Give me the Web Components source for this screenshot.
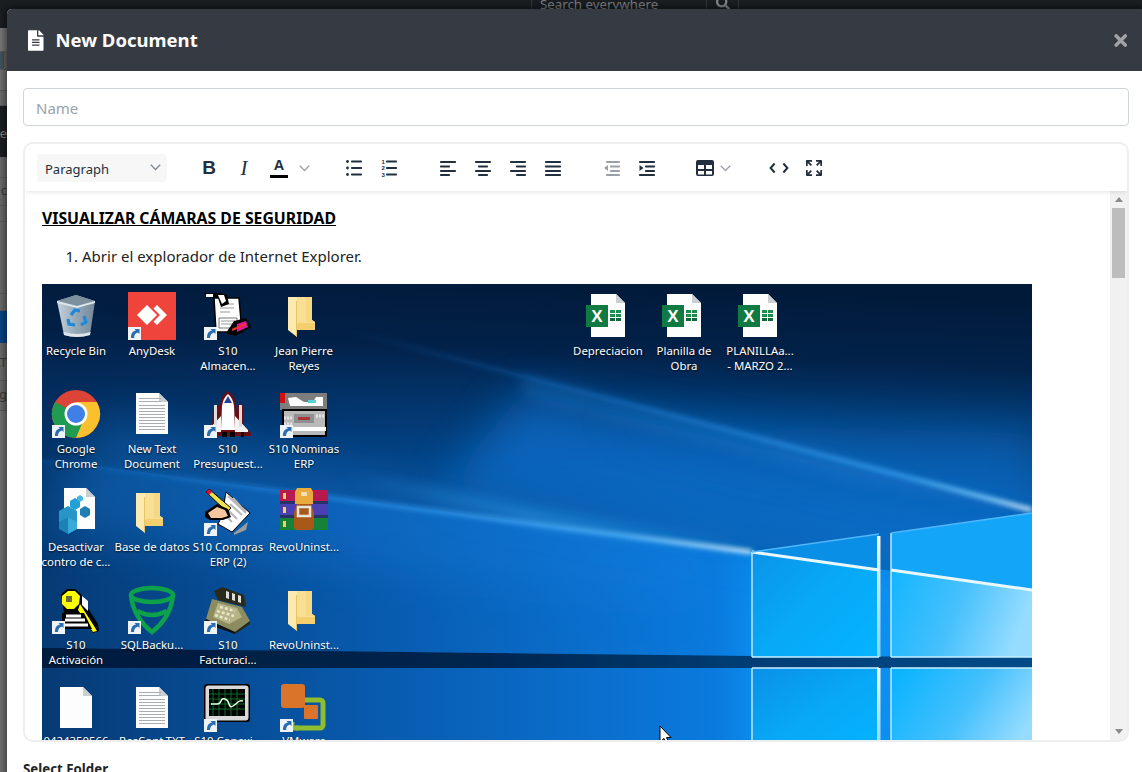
<!DOCTYPE html>
<html lang="es"><head><meta charset="utf-8"><title>New Document</title>
<style>
html,body{margin:0;height:100%;overflow:hidden;background:#6e6e6e;font-family:"Noto Sans","Open Sans",sans-serif}
</style></head><body>
<behind-page></behind-page>
<doc-modal heading="New Document">
  <name-field placeholder="Name"></name-field>
  <rich-editor>
    <h4 style="margin:0;font:700 15.8px/20px 'Noto Sans',sans-serif;color:#000;text-decoration:underline">VISUALIZAR CÁMARAS DE SEGURIDAD</h4>
    <ol style="margin:18px 0 18px;padding-left:40px;font:15px/20px 'Noto Sans',sans-serif;color:#222"><li>Abrir el explorador de Internet Explorer.</li></ol>
    <desktop-shot>
      <desk-icon x="10" y="8" icon="bin">Recycle Bin</desk-icon>
      <desk-icon x="86" y="8" icon="anydesk" link>AnyDesk</desk-icon>
      <desk-icon x="162" y="8" icon="almacen" link>S10<br>Almacen...</desk-icon>
      <desk-icon x="238" y="8" icon="folder">Jean Pierre<br>Reyes</desk-icon>
      <desk-icon x="10" y="106" icon="chrome" link>Google<br>Chrome</desk-icon>
      <desk-icon x="86" y="106" icon="text">New Text<br>Document</desk-icon>
      <desk-icon x="162" y="106" icon="shuttle" link>S10<br>Presupuest...</desk-icon>
      <desk-icon x="238" y="106" icon="nominas" link>S10 Nominas<br>ERP</desk-icon>
      <desk-icon x="10" y="204" icon="registry">Desactivar<br>contro de c...</desk-icon>
      <desk-icon x="86" y="204" icon="folder">Base de datos</desk-icon>
      <desk-icon x="162" y="204" icon="compras" link>S10 Compras<br>ERP (2)</desk-icon>
      <desk-icon x="238" y="204" icon="rar">RevoUninst...</desk-icon>
      <desk-icon x="10" y="302" icon="key" link>S10<br>Activación</desk-icon>
      <desk-icon x="86" y="302" icon="sql" link>SQLBacku...</desk-icon>
      <desk-icon x="162" y="302" icon="register" link>S10<br>Facturaci...</desk-icon>
      <desk-icon x="238" y="302" icon="folder">RevoUninst...</desk-icon>
      <desk-icon x="10" y="400" icon="blank" style="--lt:49px">0424350566</desk-icon>
      <desk-icon x="86" y="400" icon="text" style="--lt:49px">ResCont.TXT</desk-icon>
      <desk-icon x="162" y="400" icon="monitor" link style="--lt:49px">S10 Conexi...</desk-icon>
      <desk-icon x="238" y="400" icon="vm" link style="--lt:49px">VMware</desk-icon>
      <desk-icon x="542" y="8" icon="excel">Depreciacion</desk-icon>
      <desk-icon x="618" y="8" icon="excel">Planilla de<br>Obra</desk-icon>
      <desk-icon x="694" y="8" icon="excel">PLANILLAa...<br>- MARZO 2...</desk-icon>
    </desktop-shot>
  </rich-editor>
  <folder-label>Select Folder</folder-label>
</doc-modal>
<script>
function el(name, css, html, init){
  customElements.define(name, class extends HTMLElement{
    constructor(){super();this.attachShadow({mode:'open'}).innerHTML='<style>'+css+'</style>'+(typeof html==='function'?html(this):html);}
    connectedCallback(){ if(init) init(this); }
  });
}
const FA_FILE='M224 136V0H24C10.7 0 0 10.7 0 24v464c0 13.3 10.7 24 24 24h336c13.3 0 24-10.7 24-24V160H248c-13.2 0-24-10.8-24-24zm64 236c0 6.6-5.4 12-12 12H108c-6.6 0-12-5.4-12-12v-8c0-6.6 5.4-12 12-12h168c6.6 0 12 5.4 12 12v8zm0-64c0 6.6-5.4 12-12 12H108c-6.6 0-12-5.4-12-12v-8c0-6.6 5.4-12 12-12h168c6.6 0 12 5.4 12 12v8zm0-72v8c0 6.6-5.4 12-12 12H108c-6.6 0-12-5.4-12-12v-8c0-6.6 5.4-12 12-12h168c6.6 0 12 5.4 12 12zm96-114.1v6.1H256V0h6.1c6.4 0 12.5 2.5 17 7l97.9 98c4.5 4.5 7 10.6 7 16.9z';
const FA_X='M242.72 256l100.07-100.07c12.28-12.28 12.28-32.19 0-44.48l-22.24-22.24c-12.28-12.28-32.19-12.28-44.48 0L176 189.28 75.93 89.21c-12.28-12.28-32.19-12.28-44.48 0L9.21 111.45c-12.28 12.28-12.28 32.19 0 44.48L109.28 256 9.21 356.07c-12.28 12.28-12.28 32.19 0 44.48l22.24 22.24c12.28 12.28 32.2 12.28 44.48 0L176 322.72l100.07 100.07c12.28 12.28 32.2 12.28 44.48 0l22.24-22.24c12.28-12.28 12.28-32.19 0-44.48L242.72 256z';
const FA_SEARCH='M505 442.7L405.3 343c-4.5-4.5-10.6-7-17-7H372c27.6-35.3 44-79.7 44-128C416 93.1 322.9 0 208 0S0 93.1 0 208s93.1 208 208 208c48.3 0 92.7-16.4 128-44v16.3c0 6.4 2.5 12.5 7 17l99.7 99.7c9.4 9.4 24.6 9.4 33.9 0l28.3-28.3c9.4-9.4 9.4-24.6.1-34zM208 336c-70.7 0-128-57.2-128-128 0-70.7 57.2-128 128-128 70.7 0 128 57.2 128 128 0 70.7-57.2 128-128 128z';

/* page behind the modal */
el('behind-page',`
:host{display:flex;flex-direction:column;position:fixed;inset:0;background:#6f6f6f;overflow:hidden}
.nav{height:28px;flex:none;background:#1b1f23;display:flex;justify-content:flex-start;padding-left:531px;box-sizing:border-box}
.search{width:176px;height:28px;box-sizing:border-box;border:1px solid #33383d;border-top:0;color:#80848a;font:13.3px/8px "Noto Sans",sans-serif;padding-left:8px;overflow:hidden;white-space:nowrap}
.btn{width:32px;height:28px;box-sizing:border-box;border-right:1px solid #33383d;display:flex;justify-content:center;padding-left:1px}
.btn svg{width:14px;height:14px;fill:#8b8f93;margin-top:-4px}
.r{flex:none;box-sizing:border-box;border-bottom:1px solid #5f5f5f;width:7px;overflow:hidden;color:#3d3d3d;font:13px/1 "Noto Sans",sans-serif;white-space:nowrap;direction:rtl}
`,`<div class="nav"><div class="search">Search everywhere</div><div class="btn"><svg viewBox="0 0 512 512"><path d="${FA_SEARCH}"/></svg></div></div>
<div class="r" style="height:24px;background:#7b7b7b"></div>
<div class="r" style="height:18px;background:linear-gradient(90deg,#45555f 0 4px,#6a6a6a 4px)"></div>
<div class="r" style="height:21px;background:#727272"></div>
<div class="r" style="height:15px;background:#707070"></div>
<div class="r" style="height:51px;background:#1e1f24;color:#8c8c78;line-height:54px;border:0">e</div>
<div class="r" style="height:21px;background:#6d6d6d"></div>
<div class="r" style="height:28px;background:#6d6d6d;line-height:24px">c</div>
<div class="r" style="height:16px;background:#6d6d6d"></div>
<div class="r" style="height:72px;background:#6d6d6d"></div>
<div class="r" style="height:17px;background:#6d6d6d"></div>
<div class="r" style="height:32px;background:#0a4688;border:0"></div>
<div class="r" style="height:38px;background:#6d6d6d;line-height:38px">AT</div>
<div class="r" style="height:30px;background:#6d6d6d;line-height:26px">og</div>
<div style="flex:1;background:#757575"></div>`);

/* modal shell */
el('doc-modal',`
:host{display:flex;flex-direction:column;position:fixed;top:9px;left:7px;right:0;height:900px;background:#fff;border-radius:5px 0 0 0;box-shadow:0 0 9px 2px rgba(0,0,0,.55)}
header{height:62px;flex:none;box-sizing:border-box;padding:1px 15px 0 21px;background:#363a42;border-radius:5px 0 0 0;display:flex;align-items:center;color:#fff}
.f{width:15.5px;height:21px;fill:#fff;flex:none;margin:0 12px 1px 0}
h1{margin:0;flex:1;font:700 18.500px/1 "Noto Sans",sans-serif}
.x{width:13.5px;height:19px;fill:#a0a2a5;flex:none;margin-bottom:1px}
main{padding:17px 13px 0 16px;display:flex;flex-direction:column;gap:16px}
`,h=>`<header><svg class="f" viewBox="0 0 384 512"><path d="${FA_FILE}"/></svg><h1>${h.getAttribute('heading')}</h1><svg class="x" viewBox="0 0 352 512"><path d="${FA_X}"/></svg></header><main><slot></slot></main>`);

el('name-field',`
:host{display:flex;align-items:center;height:38px;box-sizing:border-box;border:1px solid #ced4da;border-radius:4px;padding:2px 12px 0;background:#fff;color:#9aa1a8;font:15px "Noto Sans",sans-serif}
`,h=>`<span>${h.getAttribute('placeholder')}</span>`);

el('folder-label',`
:host{display:block;color:#212529;font:700 13.3px/20px "Noto Sans",sans-serif;padding-top:1px}
`,`<slot></slot>`);

/* editor */
el('rich-editor',`
:host{display:flex;flex-direction:column;height:600px;box-sizing:border-box;border:2px solid #eeeeee;border-radius:10px;overflow:hidden;background:#fff}
.body{flex:1;display:flex;min-height:0}
.doc{flex:1;min-width:0;overflow:hidden;padding:17px 0 0 17px;box-sizing:border-box}
`,`<editor-toolbar></editor-toolbar><div class="body"><div class="doc"><slot></slot></div><fake-scrollbar></fake-scrollbar></div>`);

const ink='#222f3e';
const r=(x,y,w,h='2')=>`<rect x="${x}" y="${y}" width="${w}" height="${h}" rx=".8"/>`;
const ICONS={
 bul:`<circle cx="5.5" cy="5.5" r="1.4"/><circle cx="5.5" cy="12" r="1.4"/><circle cx="5.5" cy="18.5" r="1.4"/>`+r(9,4.5,11)+r(9,11,11)+r(9,17.5,11),
 num:`<text x="4.5" y="8" font-size="6" font-weight="700" font-family="Liberation Sans">1</text><text x="4.5" y="14.3" font-size="6" font-weight="700" font-family="Liberation Sans">2</text><text x="4.5" y="20.5" font-size="6" font-weight="700" font-family="Liberation Sans">3</text>`+r(9,4.5,11)+r(9,11,11)+r(9,17.5,11),
 al:r(4,5,16)+r(4,9.5,10)+r(4,14,16)+r(4,18,10),
 ac:r(4,5,16)+r(7,9.5,10)+r(4,14,16)+r(7,18,10),
 ar:r(4,5,16)+r(10,9.5,10)+r(4,14,16)+r(10,18,10),
 aj:r(4,5,16)+r(4,9.5,16)+r(4,14,16)+r(4,18,16),
 out:`<g opacity=".45">`+r(6,5,14)+r(10,9.5,10)+r(10,14,10)+r(6,18,14)+`<path d="M4 12l4-3v2h0v2l0 2z"/></g>`,
 ind:r(4,5,16)+r(10,9.5,10)+r(10,14,10)+r(4,18,16)+`<path d="M8.5 12l-4 3V9z"/>`,
 tbl:`<path fill-rule="evenodd" d="M5 4h14a2 2 0 0 1 2 2v12a2 2 0 0 1-2 2H5a2 2 0 0 1-2-2V6a2 2 0 0 1 2-2zm0 5v4h6V9zm8 0v4h6V9zm-8 6v3.5h6V15zm8 0v3.5h6V15z"/>`,
 code:`<path d="M7.6 7.5l-4 4.5 4 4.5M16.4 7.5l4 4.5-4 4.5" fill="none" stroke="${ink}" stroke-width="2"/>`,
 full:`<path d="M15.3 10l-1.2-1.3 2.9-3H14V4h5a1 1 0 011 1v5h-1.7V7l-3 3zM8.7 10L5.7 7v3H4V5c0-.6.4-1 1-1h5v1.7H7l3 3-1.3 1.3zm6.6 4l3 3v-3H20v5c0 .6-.4 1-1 1h-5v-1.7h3l-3-3 1.3-1.3zm-6.6 0l1.2 1.3-2.9 3H10V20H5a1 1 0 01-1-1v-5h1.7v3l3-3z"/>`
};
el('tool-btn',`
:host{display:flex;align-items:center;justify-content:center;width:34px;height:24px;flex:none;color:${ink}}
:host([narrow]){width:24px}
svg{width:24px;height:24px;fill:${ink}}
.b{font:700 19px/24px "Liberation Sans",sans-serif}
.i{font:italic 400 21px/24px "Liberation Serif",serif}
.a{font:700 14.5px/15px "Liberation Sans",sans-serif;display:flex;flex-direction:column;align-items:center;width:18px;height:21px;margin-top:1px}
.a i{display:block;width:18px;height:3px;background:#000;margin-top:2px}
`,h=>{const n=h.getAttribute('icon');
 if(n==='B')return '<span class="b">B</span>';
 if(n==='I')return '<span class="i">I</span>';
 if(n==='A')return '<span class="a">A<i></i></span>';
 return `<svg viewBox="0 0 24 24">${ICONS[n]}</svg>`;});
el('tool-chevron',`
:host{display:flex;align-items:center;justify-content:center;width:16px;height:24px;flex:none}
svg{width:11px;height:7px;fill:none;stroke:#9ba1a8;stroke-width:1.3}
`,`<svg viewBox="0 0 11 7"><path d="M.8.8L5.5 5.5 10.2.8"/></svg>`);
el('tool-select',`
:host{display:flex;align-items:center;justify-content:space-between;box-sizing:border-box;width:130px;height:28px;flex:none;background:#f7f7f7;border-radius:3px;padding:2px 6px 0 8px;color:${ink};font:13px "Noto Sans",sans-serif}
svg{width:11px;height:7px;fill:none;stroke:#7f8791;stroke-width:1.3;margin-top:-3px}
`,`<slot></slot><svg viewBox="0 0 11 7"><path d="M.8.8L5.5 5.5 10.2.8"/></svg>`);
el('tool-group',`:host{display:flex;gap:1px;align-items:center;flex:none}`,`<slot></slot>`);
el('editor-toolbar',`
:host{display:flex;align-items:center;gap:25px;height:47px;flex:none;box-sizing:border-box;padding:1px 0 0 12px;background:#fff;position:relative;z-index:2;box-shadow:0 2px 4px -1px rgba(34,47,62,.14)}
`,`<tool-select>Paragraph</tool-select>
<tool-group><tool-btn icon="B"></tool-btn><tool-btn icon="I"></tool-btn><tool-btn icon="A"></tool-btn><tool-chevron style="margin-left:-1px"></tool-chevron></tool-group>
<tool-group><tool-btn icon="bul"></tool-btn><tool-btn icon="num"></tool-btn></tool-group>
<tool-group><tool-btn icon="al"></tool-btn><tool-btn icon="ac"></tool-btn><tool-btn icon="ar"></tool-btn><tool-btn icon="aj"></tool-btn></tool-group>
<tool-group><tool-btn icon="out"></tool-btn><tool-btn icon="ind"></tool-btn></tool-group>
<tool-group style="padding-left:4px;gap:0"><tool-btn icon="tbl" narrow></tool-btn><tool-chevron></tool-chevron><span style="width:4px"></span></tool-group>
<tool-group><tool-btn icon="code"></tool-btn><tool-btn icon="full"></tool-btn></tool-group>`);
el('fake-scrollbar',`
:host{display:flex;flex-direction:column;align-items:center;width:17px;flex:none;background:#f1f1f1;position:relative}
.t{height:17px;flex:none;display:flex;align-items:center;justify-content:center}
svg{width:8px;height:5px;fill:#8a8a8a}
.th{width:13px;height:70px;flex:none;background:#bdbdbd}
.sp{flex:1}
`,`<div class="t"><svg viewBox="0 0 8 5"><path d="M4 0l4 5H0z"/></svg></div><div class="th"></div><div class="sp"></div><div class="t"><svg viewBox="0 0 8 5"><path d="M4 5L0 0h8z"/></svg></div>`);

/* screenshot inside the document */
el('desktop-shot',`
:host{display:block;position:relative;width:990px;height:470px;overflow:hidden;background:#03234a}
desk-wallpaper{position:absolute;inset:0}
.cur{position:absolute;left:617px;top:441px;width:13px;height:20px}
`,`<desk-wallpaper></desk-wallpaper><slot></slot><svg class="cur" viewBox="0 0 13 20"><path d="M1 1v16l4-3.5 3 6 2.5-1-3-6H12z" fill="#fff" stroke="#000" stroke-width="1"/></svg>`);

el('desk-wallpaper',`:host{display:block}svg{display:block;width:990px;height:470px}`,`
<svg viewBox="0 0 990 470">
<defs>
<linearGradient id="base" x1="0" x2="1" y1="0" y2="0"><stop offset="0" stop-color="#04305f"/><stop offset=".3" stop-color="#044a92"/><stop offset=".62" stop-color="#0566ba"/><stop offset="1" stop-color="#0878d4"/></linearGradient>
<linearGradient id="top" x1=".55" y1="0" x2=".42" y2="1"><stop offset="0" stop-color="#011a3a"/><stop offset=".22" stop-color="#021f45" stop-opacity=".96"/><stop offset=".6" stop-color="#03356e" stop-opacity=".5"/><stop offset="1" stop-color="#03356e" stop-opacity="0"/></linearGradient>
<linearGradient id="low" x1="0" x2="1" y1="0" y2="0"><stop offset="0" stop-color="#063a74"/><stop offset=".3" stop-color="#0857a8"/><stop offset=".55" stop-color="#0a6ecc"/><stop offset=".68" stop-color="#0a7ade"/><stop offset=".73" stop-color="#0c90f0"/><stop offset="1" stop-color="#0c90f0"/></linearGradient>
<linearGradient id="band" x1="0" x2="1" y1="0" y2="0"><stop offset="0" stop-color="#021b3c"/><stop offset=".45" stop-color="#032650"/><stop offset=".72" stop-color="#043e76"/><stop offset="1" stop-color="#054c88"/></linearGradient>
<linearGradient id="pl" x1="0" x2="1" y1="0" y2="1"><stop offset="0" stop-color="#0a90e8"/><stop offset=".5" stop-color="#08a8f6"/><stop offset="1" stop-color="#04b4ff"/></linearGradient>
<linearGradient id="pr" x1="0" x2="1" y1=".2" y2=".6"><stop offset="0" stop-color="#0cb4ff"/><stop offset=".55" stop-color="#45c0fc"/><stop offset="1" stop-color="#96dcff"/></linearGradient>
<linearGradient id="beamA" x1="0" x2="1" y1="0" y2="0"><stop offset="0" stop-color="#1a6cc4" stop-opacity="0"/><stop offset=".4" stop-color="#1f80d8" stop-opacity=".55"/><stop offset=".82" stop-color="#3fa6f4" stop-opacity=".9"/><stop offset=".94" stop-color="#8ad4ff"/><stop offset="1" stop-color="#f0fbff"/></linearGradient>
<linearGradient id="beamB" x1="0" x2="1" y1="0" y2="0"><stop offset="0" stop-color="#1a7cd8" stop-opacity=".1"/><stop offset=".45" stop-color="#2a90ea" stop-opacity=".8"/><stop offset=".82" stop-color="#58b8fa"/><stop offset="1" stop-color="#eafaff"/></linearGradient>
<linearGradient id="v" x1="0" x2="0" y1="0" y2="1"><stop offset="0" stop-color="#fff" stop-opacity=".95"/><stop offset="1" stop-color="#cdeeff" stop-opacity=".65"/></linearGradient>
<filter id="b30" filterUnits="userSpaceOnUse" x="-100" y="-100" width="1200" height="700"><feGaussianBlur stdDeviation="22"/></filter>
<filter id="b8" filterUnits="userSpaceOnUse" x="-100" y="-100" width="1200" height="700"><feGaussianBlur stdDeviation="7"/></filter>
<filter id="b2" filterUnits="userSpaceOnUse" x="-100" y="-100" width="1200" height="700"><feGaussianBlur stdDeviation="2.4"/></filter>
<filter id="b1" filterUnits="userSpaceOnUse" x="-100" y="-100" width="1200" height="700"><feGaussianBlur stdDeviation=".7"/></filter>
</defs>
<rect width="990" height="470" fill="url(#base)"/>
<rect width="990" height="300" fill="url(#top)"/>
<polygon points="0,175 710,268 990,306 990,390 0,390" fill="url(#low)"/>
<polygon points="480,110 990,226 990,292 710,262 400,205" fill="#0a70ce" opacity=".7" filter="url(#b30)"/>
<polygon points="60,130 710,268 640,320 0,250" fill="#1580e0" opacity=".3" filter="url(#b30)"/>
<polygon points="560,135 990,232 990,150" fill="#0a6cc8" opacity=".5" filter="url(#b30)"/>
<polygon points="480,92 990,226 800,195 480,112" fill="#2a90e8" opacity=".25" filter="url(#b8)"/>
<polygon points="300,190 710,268 500,240" fill="#4ab0fa" opacity=".5" filter="url(#b8)"/>
<line x1="300" y1="45" x2="990" y2="226" stroke="url(#beamA)" stroke-width="4" filter="url(#b2)"/>
<line x1="0" y1="176" x2="710" y2="268" stroke="url(#beamB)" stroke-width="4" filter="url(#b2)"/>
<!-- dark horizon -->
<polygon points="0,364 710,372 990,373 990,384 710,384 0,385" fill="url(#band)" filter="url(#b1)"/>
<rect y="384" width="990" height="90" fill="url(#low)"/>
<!-- panes -->
<polygon points="710,268 837,250 837,373 710,373" fill="url(#pl)"/>
<polygon points="849,249 990,229 990,373 849,373" fill="url(#pr)"/>
<polygon points="710,268 837,250 837,286" fill="#0a8fe6"/>
<polygon points="849,249 990,229 990,306 849,286" fill="#13a6f8"/>
<polygon points="710,384 837,384 837,470 710,470" fill="url(#pl)"/>
<polygon points="849,384 990,384 990,470 849,470" fill="url(#pr)"/>
<line x1="710" y1="268" x2="837" y2="286" stroke="#e8f8ff" stroke-width="3" filter="url(#b1)"/>
<line x1="849" y1="286" x2="990" y2="306" stroke="#e8f8ff" stroke-width="3" filter="url(#b1)"/>
<path d="M710 268V373M710 373H837M849 373H990M849 249V373M710 384H837M849 384H990M710 384V470M849 384V470" fill="none" stroke="#c6eeff" stroke-width="1.4" filter="url(#b1)"/>
<path d="M710 268L837 250M849 249L990 229" fill="none" stroke="#4fb6fa" stroke-width="1.4" filter="url(#b1)"/>
<rect x="835" y="252" width="3.500" height="121" fill="url(#v)" filter="url(#b1)"/>
<rect x="835" y="384" width="3.500" height="86" fill="url(#v)" filter="url(#b1)"/>
</svg>`);

const SHORT=`<rect x="0" y="35" width="13" height="13" fill="#eef3f8"/><path d="M3 46C3 41 5 39 8 38.500L6.500 37H11.500V42L10 40.500C7.500 41 6 43 6 46z" fill="#2a6cb0"/>`;
const page=(x,y,w,h,inner='',f='#fdfdfd')=>`<path d="M${x} ${y}h${w-9}l9 9v${h-9}h-${w}z" fill="${f}"/><path d="M${x+w-9} ${y}v9h9z" fill="#c9ced2"/>${inner}`;
const lines=(x,y,w,n,g)=>{let s='';for(let i=0;i<n;i++)s+=`<rect x="${x}" y="${y+i*g}" width="${w}" height="1" fill="#a9adb1"/>`;return s;};
const ART={
bin:`<defs><linearGradient id="bn" x1="0" x2="1"><stop offset="0" stop-color="#c4d2dc"/><stop offset=".5" stop-color="#94a8b6"/><stop offset="1" stop-color="#75899a"/></linearGradient></defs>
<path d="M5 9L24 3l19 6-5 34q-13 4-26 0z" fill="url(#bn)"/><path d="M5 9L24 3l19 6-18 5z" fill="#7d909e"/><path d="M5 9l20 5 18-5v2l-18 5-20-5z" fill="#dbe5ec"/><path d="M12 43q13 4 26 0l.5-3q-13 4-27 0z" fill="#dfe6eb"/>
<g fill="none" stroke="#1e88dc" stroke-width="3.2"><path d="M19 23l4-5 5 1"/><path d="M32 24l2 6-5 3"/><path d="M23 33l-6-1-1-5"/></g>`,
anydesk:`<rect width="48" height="48" fill="#ef443b"/><path d="M19 13l10 10-10 10L9 23z" fill="#fff"/><path d="M29 13l10 10-10 10-3.500-3.500L32 23l-6.500-6.500z" fill="#fff"/>`,
almacen:`<path d="M10 6h25l3 34-26 0z" fill="#fff" stroke="#000" stroke-width="1.500"/><path d="M15 26h18v10H15z" fill="#fff" stroke="#777"/><path d="M16 12h14M16 16h14M16 20h10M17 29h14M17 32h14" stroke="#999"/><path d="M0 1h10l5 0 8 2 2 9-8 3-3-9-12-1z" fill="#000"/><path d="M2 2h7v3H2z" fill="#fff"/><path d="M14 3h6l2 6-4 3z" fill="#fff"/><path d="M30 29l12-3 5 9-16 9-9-3z" fill="#000"/><path d="M33 32l9-3 2 6-11 5z" fill="#e0169c"/><path d="M28 38l14-6" stroke="#e33" stroke-width="2"/>`,
folder:`<path d="M12 5h20v23l3 2v8H12z" fill="#f9df94"/><path d="M17 31h18v7H17z" fill="#f3cf6e"/><path d="M32 5v23l3 2H26V5z" fill="#f7d985"/><path d="M8 5h9v40l-9-7z" fill="#fdeab0"/><path d="M16 9l1 0v36l-1-1z" fill="#e8c468"/>`,
chrome:`<circle cx="24" cy="24" r="24" fill="#db4437"/><path d="M24 24L3.200 36A24 24 0 0 1 3.200 12z" fill="#db4437"/><path d="M3.200 12A24 24 0 0 0 24 48l10-19z" fill="#1f9c4f"/><path d="M24 12h20.800A24 24 0 0 1 24 48l10-24z" fill="#fbc02d"/><circle cx="24" cy="24" r="11.500" fill="#fff"/><circle cx="24" cy="24" r="9" fill="#3f7fe8"/>`,
text:page(8,3,32,41,lines(11,8,22,2,3)+lines(11,15,26,9,3)),
blank:page(8,3,32,41),
shuttle:`<path d="M24 1q7 4 8 14l1 10 0-9 4-2 2 2 1 20 7 7v3H1v-3l7-7 1-20 2-2 4 2v9l1-10q1-10 8-14z" fill="#6b0e14"/><path d="M24 4q5 4 6 12l1 24H17l1-24q1-8 6-12z" fill="#fff"/><path d="M24 6l4 7h-8z" fill="#24419c"/><path d="M17 26L4 40v2h13zM31 26l13 14v2H31z" fill="#f3f3f3"/><path d="M10 15h3v22h-3zM35 15h3v22h-3z" fill="#ddd"/><path d="M18 42h5v5h-5zM26 42h5v5h-5z" fill="#000"/><path d="M8 42h3v5H8zM37 42h3v5h-3z" fill="#000"/>`,
nominas:`<path d="M0 3h47v17H0z" fill="#7d7d7d"/><path d="M0 3h5v10H0z" fill="#d10f0f"/><path d="M8 8l8-1 8 5 9 0 3-5 7 0v9H10z" fill="#fff"/><path d="M28 10h8v3h-8z" fill="#56d5d5"/><path d="M2 19h45v28H2z" fill="#000"/><path d="M4 21h41v24H4z" fill="#b9b9b9"/><path d="M14 24h20v9H14z" fill="#8f8f8f"/><path d="M18 27h12v3H18z" fill="#a8343c"/><path d="M10 37h36v4H10z" fill="#fff"/><path d="M4 34h8M36 26h9M4 28h9" stroke="#e4e4e4" stroke-dasharray="2 1" stroke-width="3"/>`,
registry:page(12,0,31,41)+`<g fill="#2795c8"><path d="M7 23l9-5 9 5v11l-9 5-9-5z"/><path d="M16 29l9 5v7l-9 5-9-5v-7z" fill="#1c82b6"/><path d="M16 29l0 17 9-5v-7z" fill="#37aada"/><path d="M18 13l5-3 5 3v6l-5 3-5-3z" fill="#23a0d6"/><path d="M28 21l5-3 5 3v6l-5 3-5-3z" fill="#1e7fb4"/><path d="M25 9l3-2 3 2v3l-3 2-3-2z" fill="#44b7e5"/></g>`,
compras:`<path d="M22 4l24 21-18 19-14-8 4-8z" fill="#fff" stroke="#000"/><path d="M24 8l18 17M29 10l13 14M26 16l12 11M24 22l9 9M22 28l6 6" stroke="#b8b8b8" stroke-width="2"/><path d="M2 4l3-3 22 19-4 4z" fill="#f3e14a" stroke="#000"/><path d="M2 4l3-3 3 3-3 3z" fill="#d8123a"/><path d="M1 24l12-8 11 5 3 8-8 3H6l-5-3z" fill="#000"/><path d="M4 25l9-6 8 3 3 6-6 2H7z" fill="#f6c79c"/><path d="M30 45l14-11-2 8-12 5z" fill="#9b9b9b"/>`,
rar:`<path d="M0 2h48v11H0z" fill="#b81a50"/><path d="M0 16h48v11H0z" fill="#4a3fb3"/><path d="M0 30h48v12H0z" fill="#168237"/><path d="M0 13h48v3H0zM0 27h48v3H0z" fill="#3a1530" opacity=".6"/><path d="M3 5h3v6H3zM3 19h3v6H3zM3 33h3v6H3z" fill="#f2d266"/><path d="M17 0h14l2 4v12h-18V4z" fill="#e9ac3c"/><path d="M17 16h14l3 8v16l-3 2H17l-3-2V24z" fill="#a8591a"/><path d="M18 19h12v9H18z" fill="none" stroke="#e9e6de" stroke-width="2.500"/><path d="M21 4h6v4h-6z" fill="#fff" opacity=".6"/>`,
key:`<path d="M9 8l6-5h8l6 5 3 8 14 22 1 7-6 2-13-19-8 0-3 3h-4l-1-4z" fill="#000"/><path d="M10 10l6-5h7l5 5-1 8-5 5h-7l-5-5z" fill="#ff0"/><path d="M14 10h6v6h-6z" fill="#444" opacity=".8"/><path d="M28 18l14 22 3 5-4 1-15-22z" fill="#ff0"/><path d="M10 27h22l8 16H10z" fill="#000"/><path d="M14 30h15M13 34h20M12 39h24" stroke="#fff" stroke-width="3"/><path d="M30 10l6 5v10l-6-6z" fill="#fff"/>`,
sql:`<g fill="none" stroke="#0ea14b" stroke-width="4.500"><ellipse cx="24" cy="9" rx="21" ry="7"/><path d="M3 9q2 22 21 37 19-15 21-37"/><path d="M9 25q15 8 30 0"/></g>`,
register:`<path d="M10 5l8-4 22 8 2 12-28-7z" fill="#2a2a1a"/><path d="M22 5l3 1v7l-3-1zM28 7l3 1v7l-3-1zM34 9l3 1v7l-3-1z" fill="#ddd"/><path d="M8 13l30 8 8 14-15 11L2 33z" fill="#8c8c60"/><path d="M14 17l19 5 5 9-13 7-16-7z" fill="#b4b487"/><path d="M16 21l15 4M13 25l17 5M11 29l15 5" stroke="#e8e8cc" stroke-dasharray="3 2" stroke-width="2.500"/><path d="M2 33l29 13v2L0 37z" fill="#111"/><path d="M31 46l15-11v3L31 48z" fill="#2b2b0e"/>`,
monitor:`<rect width="46" height="38" rx="3" fill="#000"/><rect x="1.500" y="1.500" width="43" height="35" rx="3" fill="#d9d9d9"/><rect x="5" y="5" width="36" height="27" fill="#000"/><path d="M9 5v27M15 5v27M21 5v27M27 5v27M33 5v27M5 10h36M5 15h36M5 20h36M5 25h36" stroke="#0a6e2a" stroke-width="1"/><path d="M7 20h6q3 0 4-3t4-2 4 5 4 2 5-4 5-1" fill="none" stroke="#e0ffe0" stroke-width="1.500"/>`,
vm:`<path d="M16 16h24a3 3 0 0 1 3 3v22a3 3 0 0 1-3 3H16" fill="none" stroke="#8ebd2e" stroke-width="5"/><path d="M12 38v6h6" fill="none" stroke="#8ebd2e" stroke-width="5"/><rect x="1" y="0" width="24" height="24" rx="3" fill="#d9742a"/><rect x="24" y="21" width="14" height="14" rx="1" fill="#d9742a"/>`,
excel:`<g transform="translate(-3 0)">`+page(10,2,34,43,`<g fill="#1e8e50"><rect x="29" y="18" width="5" height="3"/><rect x="35" y="18" width="5" height="3"/><rect x="29" y="22" width="5" height="3"/><rect x="35" y="22" width="5" height="3"/></g><g fill="#10683a"><rect x="29" y="26" width="5" height="3"/><rect x="35" y="26" width="5" height="3"/></g><rect x="5" y="13" width="22" height="22" fill="#117a43"/><text x="16" y="30" text-anchor="middle" font-family="Liberation Sans" font-weight="700" font-size="17" fill="#fff">X</text>`)+`</g>`
};
el('desk-icon',`
:host{position:absolute;left:var(--x);top:var(--y);width:48px;height:48px;display:block}
svg{display:block;width:48px;height:48px;overflow:visible}
.l{position:absolute;top:var(--lt,51px);left:-14px;width:76px;text-align:center;color:#fff;font:11.4px/15px "Noto Sans",sans-serif;text-shadow:0 1px 2px rgba(0,0,0,.85);white-space:nowrap}
`,h=>`<svg viewBox="0 0 48 48">${ART[h.getAttribute('icon')]||''}${h.hasAttribute('link')?SHORT:''}</svg><div class="l"><slot></slot></div>`,
h=>{h.style.setProperty('--x',h.getAttribute('x')+'px');h.style.setProperty('--y',h.getAttribute('y')+'px');});
</script>
</body></html>
